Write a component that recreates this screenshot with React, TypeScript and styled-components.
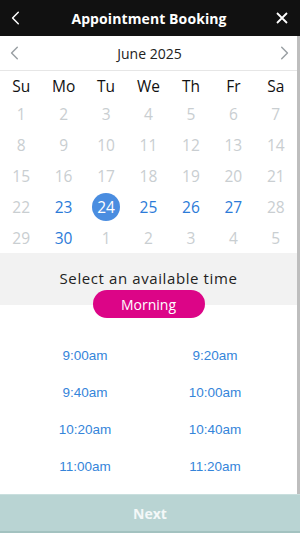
import React, { FC } from "react";
import styled, { createGlobalStyle } from "styled-components";

const GlobalStyle = createGlobalStyle`
  html, body {
    margin: 0;
    padding: 0;
    background: #fff;
  }
  * {
    box-sizing: border-box;
  }
`;

const Screen = styled.div`
  width: 300px;
  height: 533px;
  display: flex;
  flex-direction: column;
  font-family: "Open Sans", "Liberation Sans", sans-serif;
  overflow: hidden;
`;

const Header = styled.header`
  height: 36px;
  flex: none;
  background: #111;
  color: #fff;
  display: flex;
  align-items: center;
  justify-content: space-between;
  padding: 0 8px 0 6px;
`;

const HeaderTitle = styled.h1`
  margin: 0;
  font-size: 14px;
  font-weight: 700;
  letter-spacing: 0.1px;
`;

const IconButton = styled.button`
  border: 0;
  background: none;
  padding: 0;
  width: 20px;
  height: 20px;
  display: flex;
  align-items: center;
  justify-content: center;
  color: inherit;
`;

/* the scroll bar is hidden by the browser here, so its thumb is drawn as an edge */
const Scroller = styled.div`
  flex: 1;
  overflow-y: auto;
  scrollbar-width: none;
  border-right: 3px solid #bebebe;
  &::-webkit-scrollbar {
    display: none;
  }
`;

const MonthBar = styled.div`
  height: 35px;
  display: flex;
  align-items: center;
  justify-content: space-between;
  padding: 0 5px 0 7px;
  border-bottom: 1px solid #e6e6e6;
`;

const MonthLabel = styled.span`
  font-size: 14px;
  color: #222;
`;

const DayGrid = styled.div`
  display: grid;
  grid-template-columns: repeat(7, 1fr);
  grid-template-rows: 25px;
  grid-auto-rows: 31px;
  padding: 2px 0 0;
`;

const WeekDay = styled.div`
  display: flex;
  align-items: center;
  justify-content: center;
  font-size: 15.5px;
  color: #111;
`;

const Day = styled.div<{ $state: "off" | "open" | "selected" }>`
  display: flex;
  align-items: center;
  justify-content: center;
  font-size: 15.5px;
  color: ${({ $state }) =>
    $state === "open" ? "#2b7bd8" : $state === "selected" ? "#fff" : "#c9ced1"};
  > span {
    width: 28px;
    height: 28px;
    border-radius: 50%;
    display: flex;
    align-items: center;
    justify-content: center;
    background: ${({ $state }) => ($state === "selected" ? "#4a8de0" : "transparent")};
  }
`;

const TimeSection = styled.section`
  background: #f2f2f2;
  display: flex;
  flex-direction: column;
  align-items: center;
  padding: 15px 0 0;
  height: 52px;
`;

const TimeTitle = styled.div`
  font-size: 15px;
  color: #222;
  letter-spacing: 0.6px;
  line-height: 20px;
`;

const Pill = styled.button`
  margin-top: 2px;
  width: 112px;
  height: 28px;
  border: 0;
  border-radius: 14px;
  background: #dc0587;
  color: #fff;
  font-family: "Open Sans", sans-serif;
  font-size: 14px;
  flex: none;
`;

const SlotGrid = styled.div`
  display: grid;
  grid-template-columns: 130px 130px;
  justify-items: center;
  padding: 40px 0 28px 20px;
  row-gap: 17px;
`;

const Slot = styled.button`
  border: 0;
  background: none;
  height: 20px;
  padding: 0;
  font-family: "Liberation Sans", Arial, sans-serif;
  font-size: 13.5px;
  color: #3585da;
`;

const NextButton = styled.button`
  flex: none;
  height: 39px;
  border: 0;
  border-top: 1px solid #c9dfde;
  border-bottom: 2px solid #a3c2c0;
  background: #b9d4d3;
  color: #f4f8f8;
  font-family: "Open Sans", sans-serif;
  font-weight: 700;
  font-size: 14px;
`;

const Chevron: FC<{ dir: "left" | "right"; color: string; size?: number }> = ({
  dir,
  color,
  size = 14,
}) => (
  <svg width={size} height={size} viewBox="0 0 14 14" fill="none">
    <path
      d={dir === "left" ? "M9 2 L4 7 L9 12" : "M5 2 L10 7 L5 12"}
      stroke={color}
      strokeWidth="1.3"
      strokeLinecap="round"
      strokeLinejoin="round"
    />
  </svg>
);

const weekDays = ["Su", "Mo", "Tu", "We", "Th", "Fr", "Sa"];
const days: number[] = [
  1, 2, 3, 4, 5, 6, 7, 8, 9, 10, 11, 12, 13, 14, 15, 16, 17, 18, 19, 20, 21,
  22, 23, 24, 25, 26, 27, 28, 29, 30, 1, 2, 3, 4, 5,
];
const openDays = [23, 25, 26, 27, 30];
const times = ["9:00am", "9:20am", "9:40am", "10:00am", "10:20am", "10:40am", "11:00am", "11:20am"];

const App: FC = () => {
  return (
    <Screen>
      <GlobalStyle />
      <Header>
        <IconButton aria-label="Back">
          <Chevron dir="left" color="#fff" size={16} />
        </IconButton>
        <HeaderTitle>Appointment Booking</HeaderTitle>
        <IconButton aria-label="Close">
          <svg width="14" height="14" viewBox="0 0 14 14">
            <path d="M2 2 L12 12 M12 2 L2 12" stroke="#fff" strokeWidth="1.8" />
          </svg>
        </IconButton>
      </Header>
      <Scroller>
        <MonthBar>
          <Chevron dir="left" color="#9aa0a4" size={16} />
          <MonthLabel>June 2025</MonthLabel>
          <Chevron dir="right" color="#9aa0a4" size={16} />
        </MonthBar>
        <DayGrid>
          {weekDays.map((d) => (
            <WeekDay key={d}>{d}</WeekDay>
          ))}
          {days.map((d, i) => {
            const inMonth = i < 30;
            const state =
              inMonth && d === 24 ? "selected" : inMonth && openDays.includes(d) ? "open" : "off";
            return (
              <Day key={i} $state={state}>
                <span>{d}</span>
              </Day>
            );
          })}
        </DayGrid>
        <TimeSection>
          <TimeTitle>Select an available time</TimeTitle>
          <Pill>Morning</Pill>
        </TimeSection>
        <SlotGrid>
          {times.map((t) => (
            <Slot key={t}>{t}</Slot>
          ))}
        </SlotGrid>
      </Scroller>
      <NextButton>Next</NextButton>
    </Screen>
  );
};

export default App;
